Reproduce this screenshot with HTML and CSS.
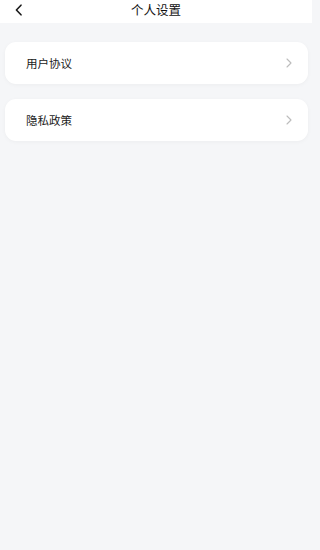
FILE: index.html
```html
<!DOCTYPE html>
<html lang="zh-CN">
<head>
<meta charset="utf-8">
<meta name="viewport" content="width=device-width, initial-scale=1">
<title>个人设置</title>
<link rel="stylesheet" href="styles.css">
</head>
<body>
<div class="page">
  <header class="nav">
    <button class="back" aria-label="返回">
      <svg width="10" height="12" viewBox="0 0 10 12"><path d="M7 1.2 L2.4 6 L7 10.8" fill="none" stroke="#1a1a1a" stroke-width="1.6" stroke-linecap="round" stroke-linejoin="round"/></svg>
    </button>
    <h1 class="title">个人设置</h1>
  </header>
  <main class="list">
    <a class="card" href="#">
      <span class="label">用户协议</span>
      <svg class="arrow" width="8" height="10" viewBox="0 0 8 10"><path d="M2 1 L6 5 L2 9" fill="none" stroke="#bcbcbc" stroke-width="1.1" stroke-linecap="round" stroke-linejoin="round"/></svg>
    </a>
    <a class="card" href="#">
      <span class="label">隐私政策</span>
      <svg class="arrow" width="8" height="10" viewBox="0 0 8 10"><path d="M2 1 L6 5 L2 9" fill="none" stroke="#bcbcbc" stroke-width="1.1" stroke-linecap="round" stroke-linejoin="round"/></svg>
    </a>
  </main>
</div>
</body>
</html>
```
FILE: styles.css
```css
html, body {
  margin: 0;
  padding: 0;
  height: 100%;
}
body {
  background: #f5f6f8;
  font-family: "Noto Sans CJK SC", "Noto Sans", sans-serif;
  color: #1a1a1a;
}
.page {
  width: 312px;
  min-height: 100%;
}
.nav {
  position: relative;
  height: 23px;
  background: #ffffff;
  display: flex;
  align-items: center;
  justify-content: center;
}
.back {
  position: absolute;
  left: 13px;
  top: 4px;
  width: 12px;
  height: 12px;
  padding: 0;
  border: 0;
  background: none;
  display: flex;
  align-items: center;
  justify-content: center;
}
.title {
  margin: 0;
  font-size: 12.5px;
  font-weight: 400;
  line-height: 20px;
  margin-top: -3px;
  color: #111;
}
.list {
  display: flex;
  flex-direction: column;
  gap: 15px;
  padding: 19px 4px 0 5px;
}
.card {
  height: 42px;
  background: #ffffff;
  border-radius: 11px;
  box-shadow: 0 1px 4px rgba(0, 0, 0, 0.04);
  display: flex;
  align-items: center;
  justify-content: space-between;
  padding: 0 15px 0 21px;
  text-decoration: none;
  color: #222;
}
.label {
  font-size: 11.5px;
  line-height: 16px;
}
.arrow {
  display: block;
}
```
